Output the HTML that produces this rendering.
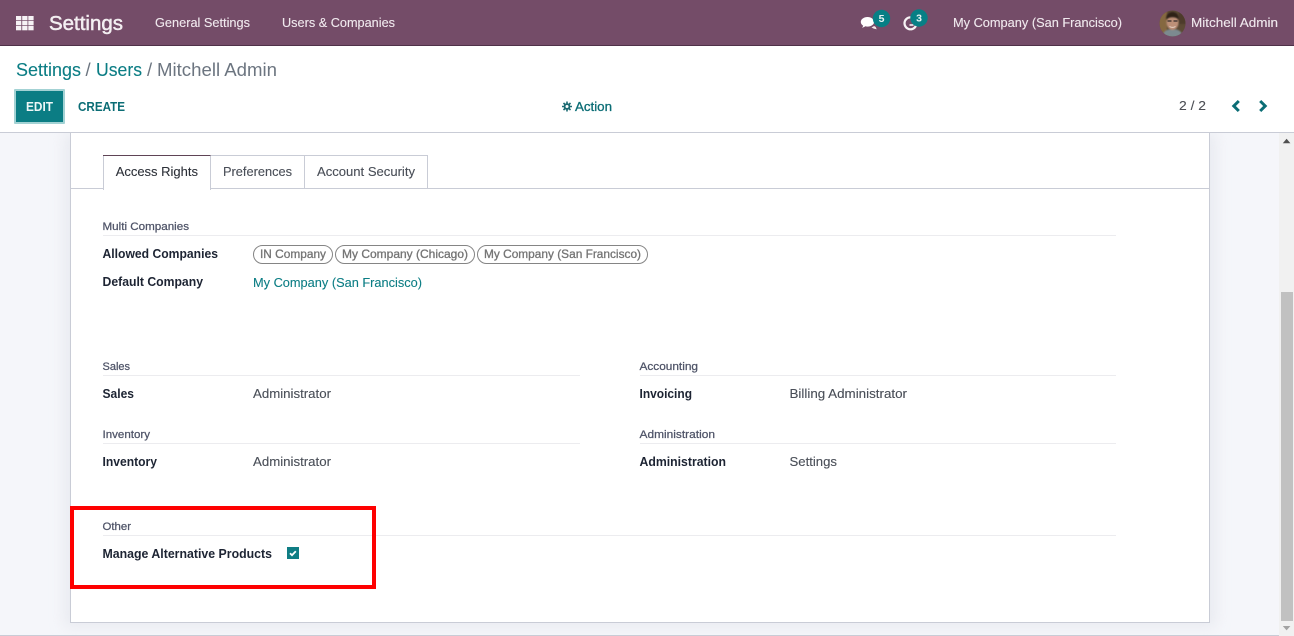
<!DOCTYPE html>
<html lang="en">
<head>
<meta charset="utf-8">
<title>Settings - Users - Mitchell Admin</title>
<style>
html,body{margin:0;padding:0;width:1294px;height:636px;overflow:hidden;background:#f5f6fa}
svg{display:block;position:absolute;left:0;top:0}
text{font-family:"Liberation Sans",Arial,sans-serif;font-size:13px;fill:#4c4f55;white-space:pre}
.nav{fill:#f0e9ee;stroke:#f0e9ee;stroke-width:.12px}
.b{font-weight:bold;fill:#1d2433}
.h{font-size:11px;fill:#4f5468;stroke:#4f5468;stroke-width:.25px}
.v{fill:#4a4f58;stroke:#4a4f58;stroke-width:.12px}
.teal{fill:#0b7d84;stroke:#0b7d84;stroke-width:.1px}
.tag{fill:#747474;font-size:12px;stroke:#747474;stroke-width:.3px}
.pill{fill:#fff;stroke:#858585;stroke-width:1}
.rule{stroke:#ececef;stroke-width:1}
</style>
</head>
<body>
<svg width="1294" height="636" viewBox="0 0 1294 636" xmlns="http://www.w3.org/2000/svg">
<defs>
<filter id="sh" x="-5%" y="-5%" width="110%" height="110%"><feGaussianBlur stdDeviation="7"/></filter>
<filter id="bl"><feGaussianBlur stdDeviation=".8"/></filter>
<clipPath id="av"><circle cx="1172.500" cy="23.500" r="13"/></clipPath>
</defs>

<!-- page background + sheet -->
<rect x="0" y="133" width="1294" height="503" fill="#f5f6fa"/>
<rect x="64" y="133" width="1152" height="494" fill="#dfe1e8" opacity=".55" filter="url(#sh)"/>
<rect x="70.500" y="125" width="1139" height="497.500" fill="#fff" stroke="#c9ccd6"/>
<rect x="0" y="635" width="1280" height="1" fill="#c9ccd6"/>

<!-- scrollbar -->
<rect x="1279" y="133" width="15" height="503" fill="#f1f1f1"/>
<rect x="1281" y="292" width="12" height="329" fill="#c1c1c1"/>
<path d="M1282.800 143.200h7.600l-3.800-4.400z" fill="#505050"/>
<path d="M1282.800 626h7.600l-3.800 4.400z" fill="#a3a3a3"/>

<!-- navbar -->
<rect x="0" y="0" width="1294" height="46" fill="#744c68"/>
<rect x="0" y="45" width="1294" height="1" fill="#4f3148"/>
<g fill="#f6f2f5">
<rect x="16" y="16" width="5.300" height="4.300"/><rect x="22.200" y="16" width="5.300" height="4.300"/><rect x="28.300" y="16" width="5.300" height="4.300"/>
<rect x="16" y="21" width="5.300" height="4.300"/><rect x="22.200" y="21" width="5.300" height="4.300"/><rect x="28.300" y="21" width="5.300" height="4.300"/>
<rect x="16" y="26" width="5.300" height="4.300"/><rect x="22.200" y="26" width="5.300" height="4.300"/><rect x="28.300" y="26" width="5.300" height="4.300"/>
</g>
<text x="49" y="30" style="font-size:20px;fill:#f3eef1;stroke:#f3eef1;stroke-width:.5px" textLength="74" lengthAdjust="spacingAndGlyphs">Settings</text>
<text class="nav" x="155" y="27" textLength="95" lengthAdjust="spacingAndGlyphs">General Settings</text>
<text class="nav" x="282" y="27" textLength="113" lengthAdjust="spacingAndGlyphs">Users &amp; Companies</text>

<!-- systray -->
<path d="M867.500 17c-3.700 0-6.700 2.200-6.700 5 0 1.500 1 2.900 2.400 3.800-.2.800-.6 1.300-1.200 1.900 1.300-.2 2.400-.7 3.300-1.400.7.200 1.400.3 2.200.3 3.700 0 6.700-2.200 6.700-4.700s-3-4.900-6.700-4.900z" fill="#fff"/>
<path d="M871.500 27.500c1.200.7 3 1.600 5.500 1.800-.7-.7-1.100-1.400-1.200-2.300l-1.700-1z" fill="#f5e6e8"/>
<circle cx="881.500" cy="18.500" r="8.700" fill="#077f85"/>
<text x="881.500" y="22" text-anchor="middle" style="font-size:10.500px;fill:#e8f4f4;font-weight:bold">5</text>
<path d="M910.500 17.300a6 6 0 1 0 6 6" fill="none" stroke="#f7f3f5" stroke-width="2.200"/>
<path d="M909.500 25h4" stroke="#f7f3f5" stroke-width="1.600"/>
<circle cx="919" cy="18" r="8.700" fill="#077f85"/>
<text x="919" y="21.500" text-anchor="middle" style="font-size:10.500px;fill:#e8f4f4;font-weight:bold">3</text>
<text class="nav" x="953" y="27" textLength="169" lengthAdjust="spacingAndGlyphs">My Company (San Francisco)</text>
<g clip-path="url(#av)">
<rect x="1159" y="10" width="27" height="27" fill="#5c4a35"/>
<rect x="1159" y="10" width="8" height="27" fill="#85683f" filter="url(#bl)"/>
<rect x="1179" y="10" width="7" height="14" fill="#4d3b2a" filter="url(#bl)"/>
<path d="M1162 37c1-6 5-8 10.500-8s9.500 2 10.500 8z" fill="#7c8a90" filter="url(#bl)"/>
<ellipse cx="1172.500" cy="22.500" rx="6" ry="7.500" fill="#bd9078" filter="url(#bl)"/>
<path d="M1166 19.500c0-5 3-7.500 6.500-7.500s6.500 2.500 6.500 7.500c-3-3-10-3-13 0z" fill="#2f2119" filter="url(#bl)"/>
<path d="M1167.500 21h4m2 0h4" stroke="#332b28" stroke-width="1.300"/>
<path d="M1169.500 26.500c2 1.200 4 1.200 6 0" stroke="#f3e9e2" stroke-width="1" fill="none" opacity=".75"/>
</g>
<text class="nav" x="1191" y="27" textLength="87" lengthAdjust="spacingAndGlyphs">Mitchell Admin</text>

<!-- control panel -->
<rect x="0" y="46" width="1294" height="86" fill="#fff"/>
<rect x="0" y="132" width="1294" height="1" fill="#c9ccd6"/>
<text class="teal" x="16" y="76" style="font-size:18.500px" textLength="65" lengthAdjust="spacingAndGlyphs">Settings</text>
<text x="85.500" y="76" style="font-size:18.500px;fill:#6c7580">/</text>
<text class="teal" x="96" y="76" style="font-size:18.500px" textLength="46" lengthAdjust="spacingAndGlyphs">Users</text>
<text x="147" y="76" style="font-size:18.500px;fill:#6c7580">/</text>
<text x="157" y="76" style="font-size:18.500px;fill:#6c7580" textLength="120" lengthAdjust="spacingAndGlyphs">Mitchell Admin</text>

<rect x="14" y="89" width="51" height="35" rx="1" fill="#a3d2d4"/>
<rect x="16" y="91" width="47" height="31" fill="#0b7d84"/>
<text x="26" y="111" style="font-size:13px;font-weight:bold;fill:#eef7f7" textLength="27" lengthAdjust="spacingAndGlyphs">EDIT</text>
<text x="78" y="111" style="font-size:13px;font-weight:bold;fill:#0b6d75" textLength="47" lengthAdjust="spacingAndGlyphs">CREATE</text>

<g transform="translate(567 106.500)">
<path d="M0-5v10M-5 0h10M-3.500-3.500l7 7M3.500-3.500l-7 7" stroke="#1c6a72" stroke-width="1.600"/>
<circle r="3.300" fill="#1c6a72"/>
<circle r="1.500" fill="#fff"/>
</g>
<text x="575" y="111" style="font-size:13px;fill:#0b6d75;stroke:#0b6d75;stroke-width:.3px" textLength="37" lengthAdjust="spacingAndGlyphs">Action</text>

<text x="1179" y="110" style="fill:#4c4f55;stroke:#4c4f55;stroke-width:.1px" textLength="27" lengthAdjust="spacingAndGlyphs">2 / 2</text>
<path d="M1238.800 101l-5 5 5 5" fill="none" stroke="#0b6d75" stroke-width="3"/>
<path d="M1260.200 101l5 5-5 5" fill="none" stroke="#0b6d75" stroke-width="3"/>

<!-- sheet edge below panel -->
<rect x="1209" y="133" width="1" height="489" fill="#c9ccd6"/>

<!-- tabs -->
<rect x="71" y="188" width="1138" height="1" fill="#c9ccd6"/>
<rect x="103.500" y="155.500" width="107" height="34" fill="#fff" stroke="#c9ccd6"/>
<rect x="103" y="155" width="108" height="1" fill="#5f4456"/>
<rect x="104" y="186" width="106" height="4" fill="#fff"/>
<path d="M210.500 155.500H427.500V188M304.500 155.500V188" fill="none" stroke="#c9ccd6"/>
<text x="115.700" y="176" style="fill:#2c3038;stroke:#2c3038;stroke-width:.1px" textLength="82.300" lengthAdjust="spacingAndGlyphs">Access Rights</text>
<text class="v" x="223" y="176" textLength="69" lengthAdjust="spacingAndGlyphs">Preferences</text>
<text class="v" x="317" y="176" textLength="98" lengthAdjust="spacingAndGlyphs">Account Security</text>

<!-- Multi companies -->
<text class="h" x="102.500" y="230" textLength="86.500" lengthAdjust="spacingAndGlyphs">Multi Companies</text>
<line class="rule" x1="103" y1="235.500" x2="1116" y2="235.500"/>
<text class="b" x="102.500" y="258" textLength="115.500" lengthAdjust="spacingAndGlyphs">Allowed Companies</text>
<rect class="pill" x="253.500" y="245.500" width="79" height="18" rx="9"/>
<text class="tag" x="260" y="258" textLength="66" lengthAdjust="spacingAndGlyphs">IN Company</text>
<rect class="pill" x="335.500" y="245.500" width="139" height="18" rx="9"/>
<text class="tag" x="342" y="258" textLength="126" lengthAdjust="spacingAndGlyphs">My Company (Chicago)</text>
<rect class="pill" x="477.500" y="245.500" width="170" height="18" rx="9"/>
<text class="tag" x="484" y="258" textLength="157" lengthAdjust="spacingAndGlyphs">My Company (San Francisco)</text>
<text class="b" x="102.500" y="286" textLength="100.500" lengthAdjust="spacingAndGlyphs">Default Company</text>
<text class="teal" x="253" y="287" textLength="169" lengthAdjust="spacingAndGlyphs">My Company (San Francisco)</text>

<!-- Sales / Accounting -->
<text class="h" x="102.500" y="370" textLength="27.500" lengthAdjust="spacingAndGlyphs">Sales</text>
<line class="rule" x1="103" y1="375.500" x2="580" y2="375.500"/>
<text class="b" x="102.500" y="398" textLength="31.500" lengthAdjust="spacingAndGlyphs">Sales</text>
<text class="v" x="253" y="398" textLength="78" lengthAdjust="spacingAndGlyphs">Administrator</text>
<text class="h" x="639.500" y="370" textLength="58.500" lengthAdjust="spacingAndGlyphs">Accounting</text>
<line class="rule" x1="640" y1="375.500" x2="1116" y2="375.500"/>
<text class="b" x="639.500" y="398" textLength="52.500" lengthAdjust="spacingAndGlyphs">Invoicing</text>
<text class="v" x="789.500" y="398" textLength="117.500" lengthAdjust="spacingAndGlyphs">Billing Administrator</text>

<!-- Inventory / Administration -->
<text class="h" x="102.500" y="438" textLength="47.500" lengthAdjust="spacingAndGlyphs">Inventory</text>
<line class="rule" x1="103" y1="443.500" x2="580" y2="443.500"/>
<text class="b" x="102.500" y="466" textLength="54.500" lengthAdjust="spacingAndGlyphs">Inventory</text>
<text class="v" x="253" y="466" textLength="78" lengthAdjust="spacingAndGlyphs">Administrator</text>
<text class="h" x="639.500" y="438" textLength="75.500" lengthAdjust="spacingAndGlyphs">Administration</text>
<line class="rule" x1="640" y1="443.500" x2="1116" y2="443.500"/>
<text class="b" x="639.500" y="466" textLength="86.500" lengthAdjust="spacingAndGlyphs">Administration</text>
<text class="v" x="789.500" y="466" textLength="47.500" lengthAdjust="spacingAndGlyphs">Settings</text>

<!-- Other -->
<text class="h" x="102.500" y="530" textLength="28.500" lengthAdjust="spacingAndGlyphs">Other</text>
<line class="rule" x1="103" y1="535.500" x2="1116" y2="535.500"/>
<text class="b" x="102.500" y="558" textLength="169.500" lengthAdjust="spacingAndGlyphs">Manage Alternative Products</text>
<rect x="287" y="547" width="12" height="12" fill="#0f7d84"/>
<path d="M290 553.200l2 2 3.800-4" fill="none" stroke="#fff" stroke-width="1.800"/>

<!-- red annotation -->
<rect x="72" y="508" width="302" height="79" fill="none" stroke="#fe0000" stroke-width="4"/>
</svg>
</body>
</html>
